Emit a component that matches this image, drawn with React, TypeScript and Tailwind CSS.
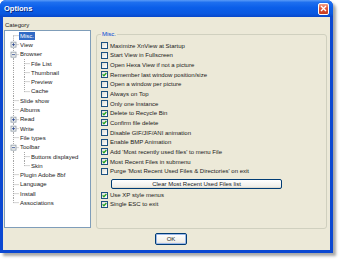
type TreeRow = {
  label: string;
  level: 0 | 1;
  toggle?: "plus" | "minus";
  selected?: boolean;
  lastChild?: boolean;
};

const tree: TreeRow[] = [
  { label: "Misc.", level: 0, selected: true },
  { label: "View", level: 0, toggle: "plus" },
  { label: "Browser", level: 0, toggle: "minus" },
  { label: "File List", level: 1 },
  { label: "Thumbnail", level: 1 },
  { label: "Preview", level: 1 },
  { label: "Cache", level: 1, lastChild: true },
  { label: "Slide show", level: 0 },
  { label: "Albums", level: 0 },
  { label: "Read", level: 0, toggle: "plus" },
  { label: "Write", level: 0, toggle: "plus" },
  { label: "File types", level: 0 },
  { label: "Toolbar", level: 0, toggle: "minus" },
  { label: "Buttons displayed", level: 1 },
  { label: "Skin", level: 1, lastChild: true },
  { label: "Plugin Adobe 8bf", level: 0 },
  { label: "Language", level: 0 },
  { label: "Install", level: 0 },
  { label: "Associations", level: 0 },
];

const options: [string, boolean][] = [
  ["Maximize XnView at Startup", false],
  ["Start View in Fullscreen", false],
  ["Open Hexa View if not a picture", false],
  ["Remember last window position/size", true],
  ["Open a window per picture", false],
  ["Always on Top", false],
  ["Only one Instance", false],
  ["Delete to Recycle Bin", true],
  ["Confirm file delete", true],
  ["Disable GIF/JIF/ANI animation", false],
  ["Enable BMP Animation", false],
  ["Add 'Most recently used files' to menu File", true],
  ["Most Recent Files in submenu", true],
  ["Purge 'Most Recent Used Files & Directories' on exit", false],
];

const ROW_H = 9.3;
const dots = { stroke: "#A5A5A5", strokeWidth: 1, strokeDasharray: "1 1" };

function Gutter({ row, index }: { row: TreeRow; index: number }) {
  const w = row.level === 0 ? 14 : 25;
  const c = ROW_H / 2;
  const first = index === 0;
  const last = index === tree.length - 1;

  return (
    <svg width={w} height={ROW_H} viewBox={`0 0 ${w} ${ROW_H}`} className="shrink-0">
      {/* root level line */}
      <line x1={8.5} x2={8.5} y1={first ? c : 0} y2={last ? c : ROW_H} {...dots} />
      {row.level === 0 && <line x1={8.5} x2={14} y1={c} y2={c} {...dots} />}
      {row.level === 0 && row.toggle === "minus" && (
        <line x1={19.5} x2={19.5} y1={c} y2={ROW_H} {...dots} />
      )}
      {row.level === 1 && (
        <>
          <line x1={19.5} x2={19.5} y1={0} y2={row.lastChild ? c : ROW_H} {...dots} />
          <line x1={19.5} x2={25} y1={c} y2={c} {...dots} />
        </>
      )}
      {row.toggle && (
        <>
          <rect x={6} y={c - 2.5} width={5} height={5} fill="#F4F4F0" stroke="#8C9AA6" strokeWidth={0.8} />
          <line x1={7} x2={10} y1={c} y2={c} stroke="#1F3E8C" strokeWidth={0.8} />
          {row.toggle === "plus" && <line x1={8.5} x2={8.5} y1={c - 1.5} y2={c + 1.5} stroke="#1F3E8C" strokeWidth={0.8} />}
        </>
      )}
    </svg>
  );
}

function CheckBox({ checked }: { checked: boolean }) {
  return (
    <span className="flex h-[7px] w-[7px] shrink-0 items-center justify-center border border-[#1C5180] bg-[linear-gradient(135deg,#DCDCD4,#FFFFFF)]">
      {checked && (
        <svg width={5} height={5} viewBox="0 0 5 5">
          <path d="M0.6 2.4 L1.9 3.7 L4.4 1" fill="none" stroke="#21A121" strokeWidth={1.3} />
        </svg>
      )}
    </span>
  );
}

function OptionRow({ label, checked, h }: { label: string; checked: boolean; h: string }) {
  return (
    <div className={`flex items-center gap-[2px] whitespace-nowrap ${h}`}>
      <CheckBox checked={checked} />
      <span>{label}</span>
    </div>
  );
}

export default function App() {
  return (
    <div className="h-[262px] w-[340px] bg-white font-['Liberation_Sans',Arial,sans-serif] text-[6px] leading-[8px] text-[#1a1a1a]">
      <div className="flex h-[253px] w-[333px] flex-col rounded-t-[6px] bg-[#0B48D2] shadow-[3px_3px_3px_rgba(0,0,0,0.35)]">
        {/* title bar */}
        <div className="flex h-[17px] items-center justify-between rounded-t-[6px] bg-[linear-gradient(to_bottom,#5A9BF7_0%,#1E6FEF_14%,#0B5EE9_45%,#0A58E0_80%,#0847C9_100%)] pl-[4px] pr-[4px]">
          <span className="text-[7.5px] font-bold text-white [text-shadow:1px_1px_0_#0A2A80]">Options</span>
          <span className="flex h-[12px] w-[11px] items-center justify-center rounded-[2px] border border-white bg-[linear-gradient(to_bottom,#F2A48E,#E2583A_40%,#C63A1E)]">
            <svg width={7} height={7} viewBox="0 0 7 7">
              <path d="M1 1 L6 6 M6 1 L1 6" stroke="white" strokeWidth={1.4} />
            </svg>
          </span>
        </div>

        {/* body */}
        <div className="mx-[3px] mb-[3px] flex flex-1 flex-col bg-[#ECE9D8]">
          <div className="flex h-[212px]">
            <div className="ml-[1px] flex w-[87px] flex-col">
              <div className="flex h-[13px] items-end pb-[1px] pl-[1px]">Category</div>
              <div className="h-[198px] border border-[#7F9DB9] bg-white">
                {tree.map((row, i) => (
                  <div key={row.label} className="flex h-[9.3px] items-center">
                    <Gutter row={row} index={i} />
                    <span
                      className={`px-[1px] leading-[8px] ${
                        row.selected ? "bg-[#316AC5] text-white" : ""
                      }`}
                    >
                      {row.label}
                    </span>
                  </div>
                ))}
              </div>
            </div>

            <fieldset className="ml-[5px] mt-[13px] h-[199px] w-[231px] rounded-[3px] border border-[#D0D0BF]">
              <legend className="ml-[4px] px-[1px] leading-[8px] text-[#0046D5]">Misc.</legend>
              <div className="flex flex-col pl-[4px] pt-[3px]">
                {options.map(([label, checked]) => (
                  <OptionRow key={label} label={label} checked={checked} h="h-[9.65px]" />
                ))}
                <button
                  type="button"
                  className="ml-[10px] mt-[3px] flex h-[10.5px] w-[171px] items-center justify-center rounded-[2px] border border-[#003C74] bg-[linear-gradient(to_bottom,#FFFFFF,#F0EFEA_80%,#D8D2C6)] leading-[8px]"
                >
                  Clear Most Recent Used Files list
                </button>
                <div className="mt-[1.5px]">
                  <OptionRow label="Use XP style menus" checked h="h-[9px]" />
                  <OptionRow label="Single ESC to exit" checked h="h-[9px]" />
                </div>
              </div>
            </fieldset>
          </div>

          <div className="mt-[4px] pl-[152px]">
            <button
              type="button"
              className="flex h-[12px] w-[32px] items-center justify-center rounded-[2px] border border-[#003C74] bg-[linear-gradient(to_bottom,#FFFFFF,#F0EFEA_80%,#D8D2C6)] shadow-[inset_0_0_0_1px_#9DB9EB]"
            >
              OK
            </button>
          </div>
        </div>
      </div>
    </div>
  );
}
